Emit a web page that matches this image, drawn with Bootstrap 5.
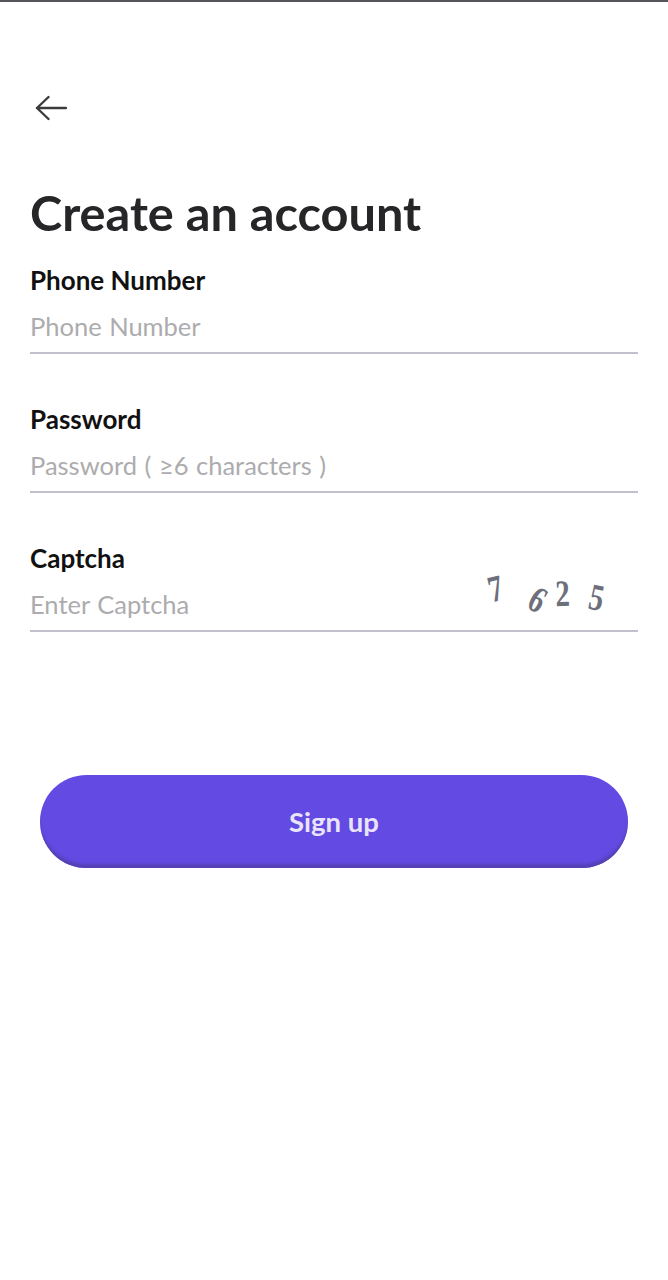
<!DOCTYPE html>
<html lang="en">
<head>
    <meta charset="UTF-8">
    <meta name="viewport" content="width=device-width, initial-scale=1.0">
    <title>Create an account</title>
    <link href="https://cdn.jsdelivr.net/npm/bootstrap@5.3.0/dist/css/bootstrap.min.css" rel="stylesheet">
    <style>
        body {
            font-family: "Lato", "Liberation Sans", sans-serif;
            background: #fff;
        }
        .screen {
            min-height: 1280px;
            border-top: 2px solid #55565a;
            padding: 0 30px;
        }
        .back-link {
            display: block;
            width: 36px;
            height: 30px;
            margin-top: 92px;
            margin-left: 5px;
            color: #3c3c3e;
        }
        .page-title {
            font-size: 48.7px;
            font-weight: 700;
            line-height: 56px;
            color: #262628;
            margin: 60px 0 24px;
        }
        .field-block {
            height: 139px;
        }
        .field-label {
            display: block;
            font-size: 26px;
            font-weight: 700;
            line-height: 32px;
            color: #111;
            margin: 0;
        }
        .field-line {
            border-bottom: 2px solid #c3bfcd;
            height: 58px;
        }
        .field-input {
            border: 0;
            outline: 0;
            padding: 4px 0 0;
            background: transparent;
            font-size: 25.5px;
            line-height: 34px;
            height: 44px;
            word-spacing: 1px;
            color: #333;
        }
        .field-input::placeholder {
            color: #acacae;
            opacity: 1;
        }
        .captcha-code {
            width: 118px;
            margin-right: 33px;
            font-family: "Liberation Serif", serif;
            font-weight: 700;
            font-size: 34px;
            line-height: 32px;
            color: #6d6f7b;
        }
        .digit-a { transform: translateY(-13px) rotate(-14deg) scale(.85, 1.1); }
        .digit-b { transform: translate(8px, -2px) rotate(30deg) scale(.85, 1.1); }
        .digit-c { transform: translateY(-8px) rotate(-2deg) scale(.85, 1.1); }
        .digit-d { transform: translateY(-4px) rotate(12deg) scale(.85, 1.1); }
        .signup-btn {
            display: block;
            width: 588px;
            height: 93px;
            margin: 94px 0 0 10px;
            border: 0;
            border-radius: 47px;
            background: #634ae2;
            box-shadow: inset 0 -5px 3px -1px #5540b5;
            color: #e9e4fb;
            font-size: 27.5px;
            font-weight: 700;
        }
    </style>
</head>
<body>
    <div class="screen">
        <a class="back-link" href="#" aria-label="Back">
            <svg width="32" height="26" viewBox="0 0 32 26" fill="none" stroke="currentColor" stroke-width="2.4" stroke-linecap="round" stroke-linejoin="round">
                <path d="M31 13H2M13.5 2 2 13l11.5 11"/>
            </svg>
        </a>
        <h1 class="page-title">Create an account</h1>
        <form onsubmit="return false;">
            <div class="field-block">
                <label class="field-label" for="phone">Phone Number</label>
                <div class="field-line d-flex align-items-center">
                    <input id="phone" class="field-input flex-grow-1" type="text" placeholder="Phone Number">
                </div>
            </div>
            <div class="field-block">
                <label class="field-label" for="password">Password</label>
                <div class="field-line d-flex align-items-center">
                    <input id="password" class="field-input flex-grow-1" type="text" placeholder="Password ( ≥6 characters )">
                </div>
            </div>
            <div class="field-block">
                <label class="field-label" for="captcha">Captcha</label>
                <div class="field-line d-flex align-items-center">
                    <input id="captcha" class="field-input flex-grow-1 w-50" type="text" placeholder="Enter Captcha">
                    <div class="captcha-code d-flex justify-content-between flex-shrink-0">
                        <span class="digit-a">7</span>
                        <span class="digit-b">6</span>
                        <span class="digit-c">2</span>
                        <span class="digit-d">5</span>
                    </div>
                </div>
            </div>
            <button class="signup-btn" type="submit">Sign up</button>
        </form>
    </div>
    <script src="https://cdn.jsdelivr.net/npm/bootstrap@5.3.0/dist/js/bootstrap.bundle.min.js"></script>
</body>
</html>
